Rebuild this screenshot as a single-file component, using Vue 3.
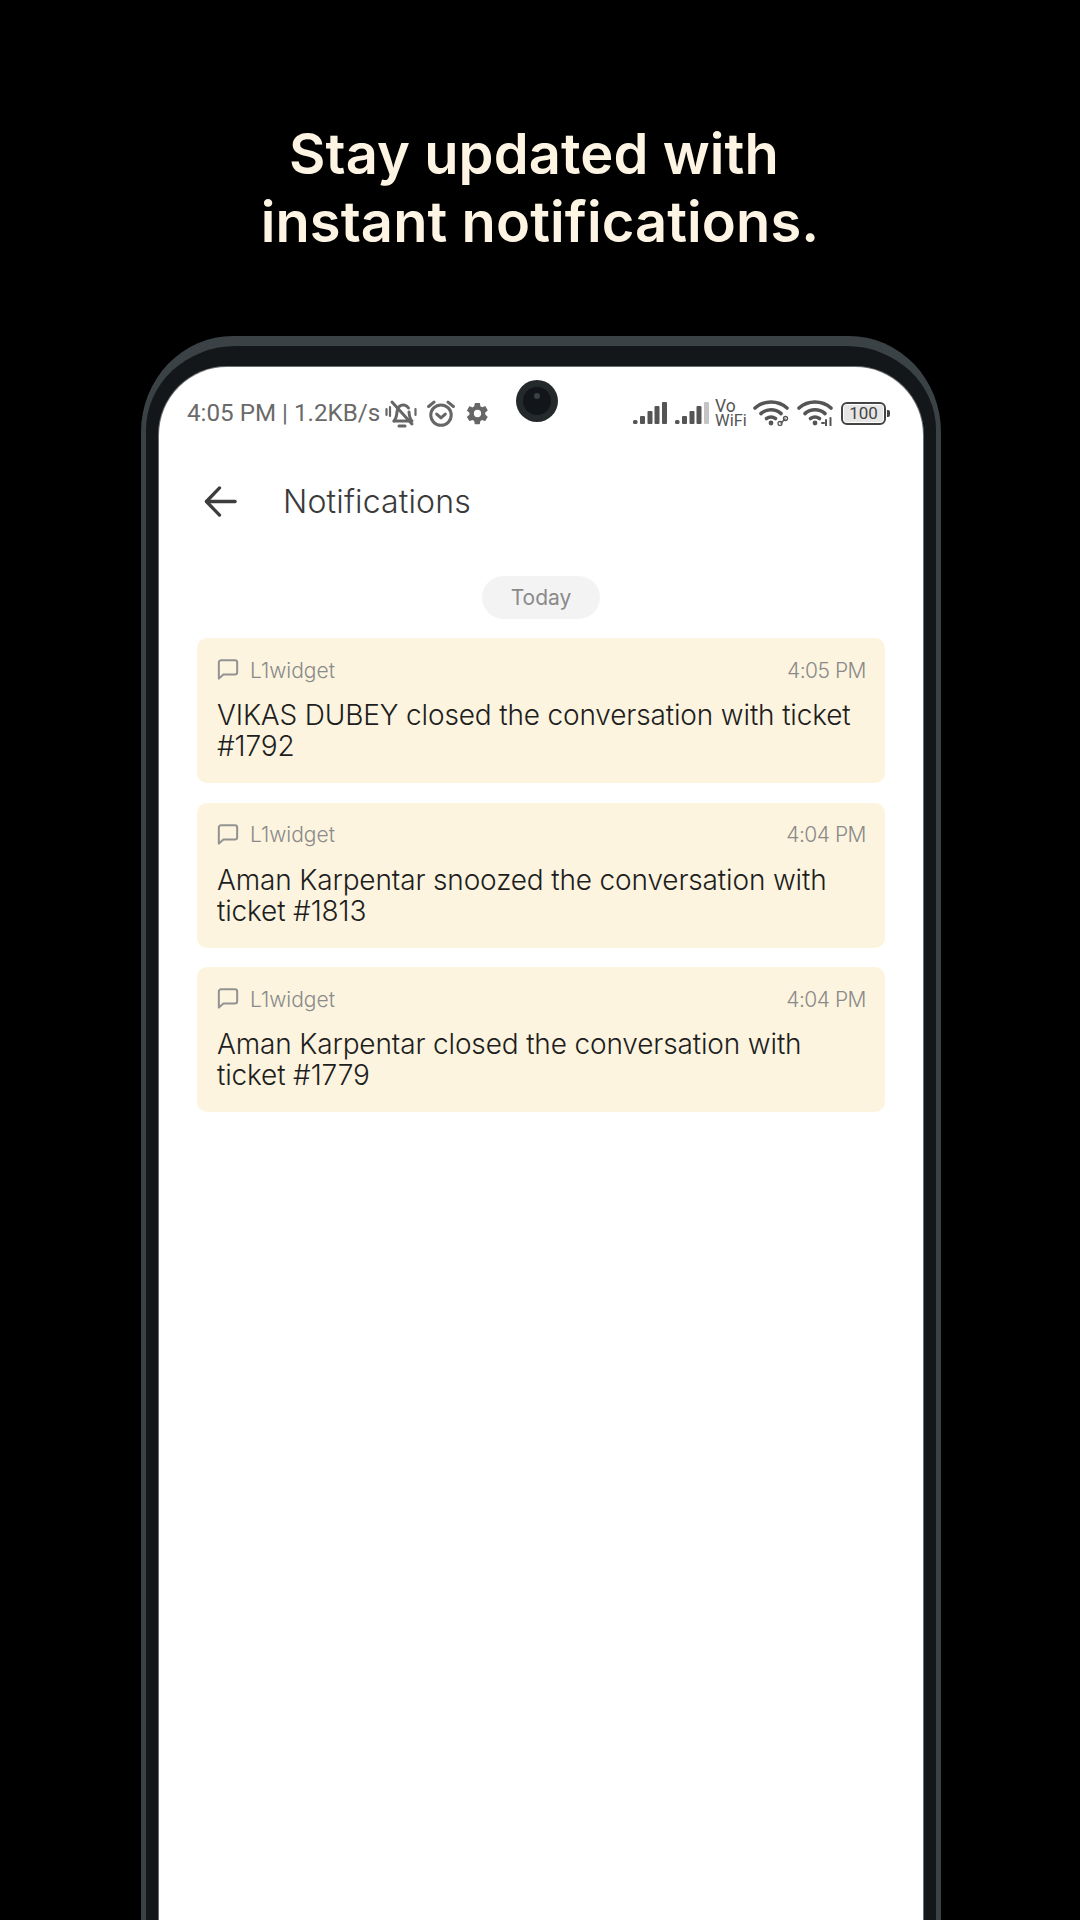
<template>
  <div class="page">
    <h1 class="headline">
      <span class="headline__first">Stay updated with</span><br />instant notifications.
    </h1>

    <div class="phone">
      <div class="phone__bezel">
        <div class="screen">
          <div class="camera"><div class="camera__lens"></div></div>

          <div class="status">
            <div class="status__left">
              <span class="status__text">4:05 PM | 1.2KB/s</span>
              <svg class="ic-bell" viewBox="0 0 32 29" fill="none" stroke="#666" stroke-width="3" stroke-linecap="round" stroke-linejoin="round">
                <path d="M9 22c2-2 2.500-4 3-9 .5-5 3.500-7.500 7-7 2 .3 3.500 1.300 4.500 3" />
                <path d="M24 13c.3 4 .8 7 3 9H9" />
                <path d="M7 3l20 22" />
                <path d="M14 27h6" />
                <path d="M1.500 10v6M5 8v9M30.500 10v6" stroke-width="2.200" />
              </svg>
              <svg class="ic-alarm" viewBox="1 1 26 25" fill="none" stroke="#666" stroke-width="2.800" stroke-linecap="round" stroke-linejoin="round">
                <circle cx="14" cy="15" r="9.500" />
                <path d="M10 14l4 3.500 4-3.500" />
                <path d="M2.500 7l5-4M25.500 7l-5-4" />
              </svg>
              <svg class="ic-gear" viewBox="0 0 24 24" fill="#666">
                <path d="M19.400 13c.04-.3.06-.65.06-1s-.02-.7-.07-1l2.150-1.680a.5.5 0 0 0 .12-.64l-2.040-3.530a.5.5 0 0 0-.62-.22l-2.540 1.020a7.500 7.500 0 0 0-1.720-1l-.38-2.700A.5.5 0 0 0 13.860 2H9.800a.5.5 0 0 0-.5.430l-.38 2.700c-.62.260-1.200.6-1.720 1L4.660 5.110a.5.500 0 0 0-.61.220L2.020 8.860a.5.500 0 0 0 .12.640L4.300 11.180c-.05.320-.1.670-.1 1s.02.680.07 1L2.100 14.860a.5.500 0 0 0-.12.640l2.040 3.530c.12.220.38.300.61.220l2.540-1.020c.53.400 1.100.740 1.720 1l.38 2.700c.05.240.26.420.5.420h4.070c.25 0 .46-.18.500-.43l.38-2.700c.62-.250 1.200-.600 1.720-1l2.540 1.020c.23.080.49 0 .61-.22l2.040-3.530a.5.5 0 0 0-.12-.640L19.400 13zM12 15.500a3.500 3.500 0 1 1 0-7 3.500 3.500 0 0 1 0 7z" />
              </svg>
            </div>
            <div class="status__right">
              <svg class="ic-signal" viewBox="0 0 34 22" fill="#555">
                <rect x="0" y="18" width="4.500" height="4" rx="1.500" />
                <rect x="7" y="14" width="5" height="8" rx="1" />
                <rect x="14.500" y="9" width="5" height="13" rx="1" />
                <rect x="21.500" y="4" width="5" height="18" rx="1" />
                <rect x="29" y="0" width="5" height="22" rx="1" />
              </svg>
              <svg class="ic-signal" viewBox="0 0 34 22" fill="#555">
                <rect x="0" y="18" width="4.500" height="4" rx="1.500" />
                <rect x="7" y="14" width="5" height="8" rx="1" />
                <rect x="14.500" y="9" width="5" height="13" rx="1" />
                <rect x="21.500" y="4" width="5" height="18" rx="1" />
                <rect x="29" y="0" width="5" height="22" rx="1" fill="#c4c4c4" />
              </svg>
              <div class="vowifi">
                <span class="vowifi__vo">Vo</span>
                <span class="vowifi__wifi">WiFi</span>
              </div>
              <svg class="ic-wifi" viewBox="0 0 36 26" fill="none" stroke="#555" stroke-width="3.600" stroke-linecap="round">
                <path d="M2 8c9-8 23-8 32 0" />
                <path d="M8 13.500c6-5 14-5 20 0" />
                <path d="M13.500 18.500c3-2 6-2 9 0" />
                <circle cx="18" cy="23" r="2.400" fill="#555" stroke="none" />
                <path d="M28 23l4-4" stroke-width="1.500" />
                <circle cx="27" cy="23.500" r="2" stroke-width="1.300" />
                <circle cx="32.500" cy="18.500" r="2" stroke-width="1.300" />
              </svg>
              <svg class="ic-wifi" viewBox="0 0 36 26" fill="none" stroke="#555" stroke-width="3.600" stroke-linecap="round">
                <path d="M2 8c9-8 23-8 32 0" />
                <path d="M8 13.500c6-5 14-5 20 0" />
                <path d="M13.500 18.500c3-2 6-2 9 0" />
                <circle cx="18" cy="23" r="2.400" fill="#555" stroke="none" />
                <path d="M29 20v6M33.500 18v8" stroke-width="2" />
                <path d="M25 23h2" stroke-width="2" />
              </svg>
              <div class="battery">
                <div class="battery__body"><span class="battery__level">100</span></div>
                <div class="battery__tip"></div>
              </div>
            </div>
          </div>

          <div class="appbar">
            <svg class="ic-back" viewBox="0 0 36 36" fill="none" stroke="#3d3d3d" stroke-width="3.400" stroke-linecap="round" stroke-linejoin="round">
              <path d="M33 18H4" />
              <path d="M17 4L3.500 18 17 32" />
            </svg>
            <span class="appbar__title">Notifications</span>
          </div>

          <div class="day"><span class="day__pill">Today</span></div>

          <div class="list">
            <div v-for="n in notifications" :key="n.text" class="card">
              <div class="card__top">
                <svg class="ic-chat" viewBox="0 0 24 24" fill="none" stroke="#929292" stroke-width="2.200" stroke-linejoin="round">
                  <path d="M4.500 2.500h15a2.500 2.500 0 0 1 2.500 2.500v10.500a2.500 2.500 0 0 1-2.500 2.500H7l-5 4.500V5a2.500 2.500 0 0 1 2.500-2.500z" />
                </svg>
                <span class="card__source">L1widget</span>
                <span class="card__time">{{ n.time }}</span>
              </div>
              <p class="card__text">{{ n.text }}</p>
            </div>
          </div>
        </div>
      </div>
    </div>
  </div>
</template>

<script setup>
const notifications = [
  { time: "4:05 PM", text: "VIKAS DUBEY closed the conversation with ticket #1792" },
  { time: "4:04 PM", text: "Aman Karpentar snoozed the conversation with ticket #1813" },
  { time: "4:04 PM", text: "Aman Karpentar closed the conversation with ticket #1779" },
];
</script>

<style>
html,
body {
  margin: 0;
  background: #000;
}
</style>

<style scoped>
.page {
  width: 1080px;
  height: 1920px;
  background: #000;
  overflow: hidden;
  display: flex;
  flex-direction: column;
  align-items: center;
}
.headline {
  margin: 120px 0 0 0;
  font-family: Inter, sans-serif;
  font-size: 56px;
  font-weight: 600;
  line-height: 68px;
  letter-spacing: 0.1px;
  color: #fdf4e3;
  text-align: center;
}
.headline__first {
  padding-right: 12px;
}
.phone {
  margin-top: 80px;
  margin-left: 2px;
  width: 800px;
  flex: 1;
  padding: 10px 5px 0;
  box-sizing: border-box;
  background: #3b4245;
  border-radius: 92px 92px 0 0 / 96px 96px 0 0;
}
.phone__bezel {
  height: 100%;
  padding: 21px 13px 0;
  box-sizing: border-box;
  background: #131719;
  border-radius: 90px 90px 0 0 / 84px 84px 0 0;
}
.screen {
  position: relative;
  height: 100%;
  background: #fff;
  border-radius: 68px 68px 0 0;
  box-shadow: 0 0 0 1px #6b6f70;
}
.camera {
  position: absolute;
  left: 357px;
  top: 13px;
  width: 42px;
  height: 42px;
  border-radius: 50%;
  background: #24292b;
  display: flex;
  align-items: center;
  justify-content: center;
}
.camera__lens {
  position: relative;
  width: 28px;
  height: 28px;
  border-radius: 50%;
  background: #12161a;
}
.camera__lens::after {
  content: "";
  position: absolute;
  left: 11px;
  top: 6px;
  width: 6px;
  height: 6px;
  border-radius: 50%;
  background: #3a4043;
}
.status {
  display: flex;
  justify-content: space-between;
  align-items: center;
  height: 44px;
  padding: 24px 33px 0 28px;
}
.status__left,
.status__right {
  display: flex;
  align-items: center;
}
.status__text {
  font-family: Roboto, sans-serif;
  font-size: 24.2px;
  color: #6a6a6a;
}
.ic-bell {
  width: 32px;
  height: 29px;
  margin-left: 5px;
}
.ic-alarm {
  width: 28px;
  height: 27px;
  margin-left: 10px;
}
.ic-gear {
  width: 25px;
  height: 25px;
  margin-left: 10px;
}
.status__right {
  gap: 8px;
}
.ic-signal {
  width: 34px;
  height: 22px;
}
.vowifi {
  display: flex;
  flex-direction: column;
  width: 30px;
  margin-left: -2px;
  font-family: Roboto, sans-serif;
  color: #555;
}
.vowifi__vo {
  font-size: 17.5px;
  line-height: 15px;
}
.vowifi__wifi {
  font-size: 16.5px;
  line-height: 14px;
}
.ic-wifi {
  width: 36px;
  height: 26px;
}
.battery {
  display: flex;
  align-items: center;
}
.battery__body {
  width: 39px;
  height: 17px;
  padding: 1px;
  border: 2.5px solid #444;
  border-radius: 6px;
  box-sizing: content-box;
}
.battery__level {
  display: block;
  height: 17px;
  border-radius: 2px;
  background: #e6e6e6;
  font-family: Roboto, sans-serif;
  font-size: 17px;
  line-height: 17px;
  color: #444;
  text-align: center;
}
.battery__tip {
  width: 3px;
  height: 7px;
  margin-left: 1px;
  background: #444;
  border-radius: 0 2px 2px 0;
}
.appbar {
  display: flex;
  align-items: center;
  height: 50px;
  margin-top: 41px;
  padding-left: 44px;
}
.ic-back {
  width: 35px;
  height: 35px;
}
.appbar__title {
  margin-left: 45px;
  font-family: Inter, sans-serif;
  font-weight: 300;
  font-size: 32px;
  letter-spacing: 0.15px;
  color: #3a3a3a;
}
.day {
  display: flex;
  justify-content: center;
  margin-top: 50px;
}
.day__pill {
  width: 118px;
  height: 43px;
  border-radius: 22px;
  background: #f3f3f3;
  font-family: Inter, sans-serif;
  font-size: 21px;
  line-height: 43px;
  text-align: center;
  color: #8a8a8a;
}
.list {
  display: flex;
  flex-direction: column;
  gap: 19.5px;
  margin: 19px 38px 0;
}
.card {
  height: 145px;
  box-sizing: border-box;
  padding: 17px 19px 0 20px;
  background: #fcf4de;
  border-radius: 10px;
}
.card__top {
  display: flex;
  align-items: center;
  height: 30px;
}
.ic-chat {
  width: 22px;
  height: 22px;
  margin-top: -2px;
}
.card__source {
  margin-left: 11px;
  flex: 1;
  font-family: Inter, sans-serif;
  font-weight: 300;
  font-size: 21px;
  color: #8a8a8a;
}
.card__time {
  font-family: Inter, sans-serif;
  font-weight: 300;
  font-size: 21px;
  letter-spacing: -0.5px;
  color: #8a8a8a;
}
.card__text {
  margin: 15px 0 0 0;
  font-family: Inter, sans-serif;
  font-weight: 300;
  font-size: 28px;
  line-height: 31px;
  letter-spacing: -0.15px;
  color: #1e1e1e;
}
</style>
